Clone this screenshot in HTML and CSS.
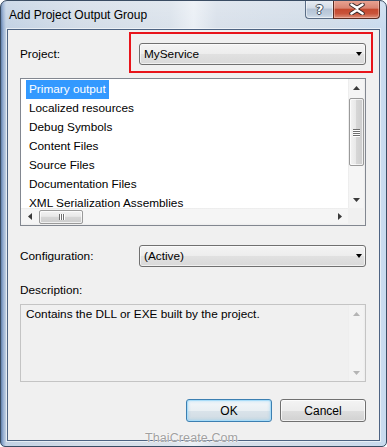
FILE: index.html
```html
<!DOCTYPE html>
<html>
<head>
<meta charset="utf-8">
<link rel="stylesheet" href="styles.css">
</head>
<body>
<div class="window">
  <div class="titlebar">
    <div class="title">Add Project Output Group</div>
    <div class="caption-buttons">
      <div class="cap-btn help"><span class="help-glyph">?</span></div>
      <div class="cap-btn close">
        <svg width="16" height="12" viewBox="0 0 16 12"><path d="M2.5 1.5 L8 5 L13.5 1.5 M2.5 10.5 L8 7 L13.5 10.5" fill="none" stroke="#3b2a2a" stroke-width="4.4" stroke-linecap="round"/><path d="M2.5 1.5 L8 5 L13.5 1.5 M2.5 10.5 L8 7 L13.5 10.5" fill="none" stroke="#fff" stroke-width="2.6" stroke-linecap="round"/></svg>
      </div>
    </div>
  </div>
  <div class="client">
    <div class="row project-row">
      <div class="label">Project:</div>
      <div class="combo"><span class="combo-text">MyService</span><span class="drop-arrow"></span></div>
    </div>
    <div class="listbox">
      <div class="items">
        <div class="item"><span class="item-text selected">Primary output</span></div>
        <div class="item"><span class="item-text">Localized resources</span></div>
        <div class="item"><span class="item-text">Debug Symbols</span></div>
        <div class="item"><span class="item-text">Content Files</span></div>
        <div class="item"><span class="item-text">Source Files</span></div>
        <div class="item"><span class="item-text">Documentation Files</span></div>
        <div class="item"><span class="item-text">XML Serialization Assemblies</span></div>
      </div>
      <div class="vscroll">
        <div class="sb-btn"><svg width="7" height="4" viewBox="0 0 7 4"><path d="M0 4 L3.5 0 L7 4 Z" fill="#3a3a3a"/></svg></div>
        <div class="vtrack">
          <div class="vthumb"><span class="hgrip"></span><span class="hgrip"></span><span class="hgrip"></span><span class="hgrip"></span></div>
        </div>
        <div class="sb-btn"><svg width="7" height="4" viewBox="0 0 7 4"><path d="M0 0 L7 0 L3.5 4 Z" fill="#3a3a3a"/></svg></div>
      </div>
      <div class="hscroll">
        <div class="sb-btn"><svg width="4" height="7" viewBox="0 0 4 7"><path d="M4 0 L4 7 L0 3.5 Z" fill="#3a3a3a"/></svg></div>
        <div class="htrack">
          <div class="hthumb"><span class="vgrip"></span><span class="vgrip"></span><span class="vgrip"></span></div>
        </div>
        <div class="sb-btn"><svg width="4" height="7" viewBox="0 0 4 7"><path d="M0 0 L4 3.5 L0 7 Z" fill="#3a3a3a"/></svg></div>
      </div>
      <div class="corner"></div>
    </div>
    <div class="row config-row">
      <div class="label">Configuration:</div>
      <div class="combo"><span class="combo-text">(Active)</span><span class="drop-arrow"></span></div>
    </div>
    <div class="desc-label">Description:</div>
    <div class="descbox">
      <div class="desc-text">Contains the DLL or EXE built by the project.</div>
      <div class="vscroll disabled">
        <div class="sb-btn"><svg width="7" height="4" viewBox="0 0 7 4"><path d="M0 4 L3.5 0 L7 4 Z" fill="#b4b4b4"/></svg></div>
        <div class="vtrack"></div>
        <div class="sb-btn"><svg width="7" height="4" viewBox="0 0 7 4"><path d="M0 0 L7 0 L3.5 4 Z" fill="#b4b4b4"/></svg></div>
      </div>
    </div>
    <div class="buttons">
      <div class="btn default">OK</div>
      <div class="btn">Cancel</div>
    </div>
    <div class="highlight"></div>
  </div>
  <div class="watermark">ThaiCreate.Com</div>
</div>
</body>
</html>
```

FILE: styles.css
```css
html, body {
  margin: 0;
  padding: 0;
  background: #ffffff;
}

body {
  font-family: "Liberation Sans", Arial, sans-serif;
  font-size: 11.8px;
  color: #000;
}

.window {
  position: relative;
  width: 387px;
  height: 447px;
  box-sizing: border-box;
  border: 1px solid #3a4c63;
  border-radius: 7px 7px 5px 5px;
  padding: 0 6px 5px 6px;
  display: flex;
  flex-direction: column;
  background:
    linear-gradient(to bottom, rgba(255,255,255,0.2) 0, rgba(255,255,255,0) 28px),
    linear-gradient(to right, #5f7fab 0, #93acd0 2px, #c3d2e4 5px, #d3dce7 20%, #dae2eb 44%, #eaeff5 50%, #d8e0ea 56%, #d1dce8 85%, #c9dbef 100%);
  overflow: hidden;
}

.titlebar {
  height: 28px;
  flex: none;
  display: flex;
  align-items: center;
  justify-content: space-between;
}

.title {
  margin-left: 2px;
  font-size: 12px;
  color: #000;
}

.caption-buttons {
  align-self: flex-start;
  margin-top: -1px;
  display: flex;
}

.cap-btn {
  height: 19px;
  box-sizing: border-box;
  display: flex;
  align-items: center;
  justify-content: center;
}

.help {
  width: 28px;
  border: 1px solid #5a6d86;
  border-right: none;
  border-top: none;
  border-bottom-left-radius: 4px;
  background: linear-gradient(to bottom, #e9eef4 0%, #d3dce7 45%, #b4c3d5 50%, #bfcddd 80%, #d2deeb 100%);
  box-shadow: inset 0 0 0 1px rgba(255,255,255,0.5);
}

.help-glyph {
  font-family: "DejaVu Sans", sans-serif;
  font-weight: bold;
  font-size: 13px;
  line-height: 13px;
  color: #fff;
  text-shadow: 1px 0 0 #3d4b5c, -1px 0 0 #3d4b5c, 0 1px 0 #3d4b5c, 0 -1px 0 #3d4b5c;
}

.close {
  width: 47px;
  border: 1px solid #5b2c22;
  border-top: none;
  border-bottom-right-radius: 4px;
  background: linear-gradient(to bottom, #eaa695 0%, #d98472 45%, #c5492f 52%, #c9533a 75%, #dc8f7a 100%);
  box-shadow: inset 0 0 0 1px rgba(255,210,200,0.45);
}

.client {
  position: relative;
  flex: 1;
  box-sizing: border-box;
  border: 1px solid #4d6382;
  background: #f0f0f0;
  padding: 0 13px 0 12px;
  display: flex;
  flex-direction: column;
  box-shadow: 0 0 0 1px rgba(255,255,255,0.55);
}

.row {
  display: flex;
  align-items: center;
  height: 22px;
}

.project-row {
  margin-top: 13px;
}

.config-row {
  margin-top: 19px;
}

.label {
  width: 119px;
  flex: none;
}

.combo {
  flex: 1;
  height: 22px;
  box-sizing: border-box;
  border: 1px solid #707070;
  border-radius: 3px;
  background: linear-gradient(to bottom, #f4f4f4 0%, #ededed 50%, #e1e1e1 51%, #d9d9d9 100%);
  display: flex;
  align-items: center;
  justify-content: space-between;
  padding: 0 4px 0 4px;
  box-shadow: inset 0 0 0 1px rgba(255,255,255,0.6);
}

.drop-arrow {
  width: 0;
  height: 0;
  border-left: 3.5px solid transparent;
  border-right: 3.5px solid transparent;
  border-top: 4px solid #000;
  margin-right: -1px;
}

.listbox {
  margin-top: 13px;
  height: 148px;
  box-sizing: border-box;
  border: 1px solid #828790;
  background: #fff;
  display: grid;
  grid-template-columns: 1fr 17px;
  grid-template-rows: 1fr 17px;
}

.items {
  overflow: hidden;
  padding: 1px 0 0 5px;
}

.item {
  height: 19px;
  line-height: 19px;
  white-space: nowrap;
}

.item-text {
  display: inline-block;
  padding: 0 3px;
}

.item-text.selected {
  background: #3399ff;
  color: #fff;
}

.vscroll {
  display: flex;
  flex-direction: column;
  background: linear-gradient(to right, #e6e6e6 0, #f5f5f5 1px, #f5f5f5 15px, #ececec 17px);
}

.sb-btn {
  flex: none;
  height: 17px;
  width: 17px;
  display: flex;
  align-items: center;
  justify-content: center;
}

.vtrack {
  flex: 1;
  display: flex;
  flex-direction: column;
  align-items: center;
}

.vthumb {
  margin-top: 2px;
  width: 15px;
  height: 68px;
  box-sizing: border-box;
  border: 1px solid #9a9a9a;
  border-radius: 2px;
  background: linear-gradient(to right, #f3f3f3 0%, #e8e8e8 45%, #d6d6d6 50%, #cdcdcd 100%);
  box-shadow: inset 0 0 0 1px rgba(255,255,255,0.7);
  display: flex;
  flex-direction: column;
  align-items: center;
  justify-content: center;
  gap: 1px;
}

.hgrip {
  width: 7px;
  height: 1px;
  background: #6e6e6e;
  box-shadow: 0 1px 0 #fff;
}

.hscroll {
  display: flex;
  background: linear-gradient(to bottom, #e6e6e6 0, #f5f5f5 1px, #f5f5f5 15px, #ececec 17px);
}

.htrack {
  flex: 1;
  display: flex;
  align-items: center;
}

.hthumb {
  margin-left: 1px;
  width: 44px;
  height: 14px;
  box-sizing: border-box;
  border: 1px solid #9a9a9a;
  border-radius: 2px;
  background: linear-gradient(to bottom, #f3f3f3 0%, #e8e8e8 45%, #d6d6d6 50%, #cdcdcd 100%);
  box-shadow: inset 0 0 0 1px rgba(255,255,255,0.7);
  display: flex;
  align-items: center;
  justify-content: center;
  gap: 1px;
}

.vgrip {
  width: 1px;
  height: 6px;
  background: #6e6e6e;
  box-shadow: 1px 0 0 #fff;
}

.corner {
  background: #f0f0f0;
}

.desc-label {
  margin-top: 15px;
  height: 17px;
  line-height: 17px;
}

.descbox {
  margin-top: 5px;
  height: 78px;
  box-sizing: border-box;
  border: 1px solid #c4c4c4;
  background: #f0f0f0;
  display: flex;
}

.desc-text {
  flex: 1;
  padding: 1px 0 0 5px;
  line-height: 17px;
}

.vscroll.disabled {
  width: 17px;
  background: linear-gradient(to right, #e9e9e9 0, #f3f3f3 1px, #f3f3f3 15px, #ececec 17px);
}

.buttons {
  margin-top: 17px;
  display: flex;
  justify-content: flex-end;
  gap: 8px;
}

.btn {
  width: 86px;
  height: 23px;
  box-sizing: border-box;
  border: 1px solid #707070;
  border-radius: 3px;
  background: linear-gradient(to bottom, #f4f4f4 0%, #ececec 50%, #dedede 51%, #d1d1d1 100%);
  box-shadow: inset 0 0 0 1px rgba(255,255,255,0.7);
  display: flex;
  align-items: center;
  justify-content: center;
  font-size: 12px;
}

.btn.default {
  border-color: #3c7fb1;
  box-shadow: inset 0 0 0 1px #a8dcf8, inset 0 0 3px 1px rgba(120,200,245,0.5);
  background: linear-gradient(to bottom, #f2f7fa 0%, #e9eff3 50%, #dae3ea 51%, #cfdbe3 100%);
}

.highlight {
  position: absolute;
  left: 121px;
  top: 2px;
  width: 244px;
  height: 41px;
  box-sizing: border-box;
  border: 2px solid #e8141b;
}

.watermark {
  position: absolute;
  left: 144px;
  top: 430px;
  font-size: 12.5px;
  letter-spacing: 0.1px;
  color: #a0a0a0;
  text-shadow: 0 0 2px #fff, 0 0 1px #fff;
}
```
